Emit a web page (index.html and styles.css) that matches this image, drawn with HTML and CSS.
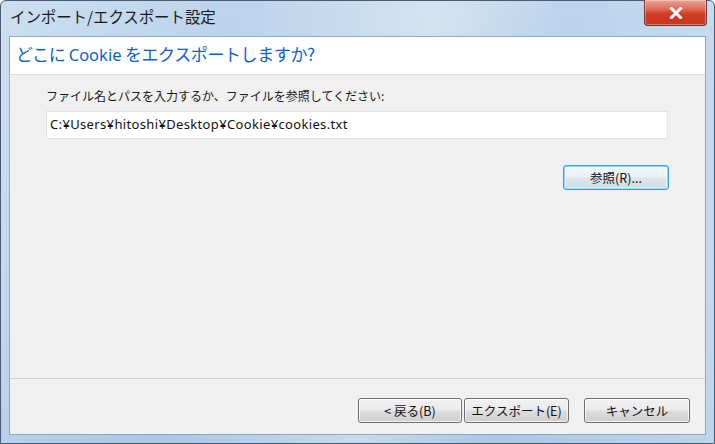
FILE: index.html
```html
<!DOCTYPE html>
<html lang="ja">
<head>
<meta charset="utf-8">
<title>インポート/エクスポート設定</title>
<link rel="stylesheet" href="styles.css">
</head>
<body>
<div class="window">
  <div class="titlebar">
    <span class="title">インポート/エクスポート設定</span>
    <div class="close">
      <svg width="14" height="12" viewBox="0 0 14 12"><path d="M2.5 1.5 L11.5 10.5 M11.5 1.5 L2.5 10.5" stroke="#fff" stroke-width="3" stroke-linecap="square"/></svg>
    </div>
  </div>
  <div class="client">
    <div class="header">どこに <span class="latin">Cookie</span> をエクスポートしますか?</div>
    <div class="body">
      <div class="label">ファイル名とパスを入力するか、ファイルを参照してください:</div>
      <div class="input">C:¥Users¥hitoshi¥Desktop¥Cookie¥cookies.txt</div>
      <div class="browse-row">
        <button class="btn default">参照(R)...</button>
      </div>
    </div>
    <div class="footer">
      <button class="btn back">&lt; 戻る(B)</button>
      <button class="btn export">エクスポート(E)</button>
      <button class="btn cancel">キャンセル</button>
    </div>
  </div>
</div>
</body>
</html>
```

FILE: styles.css
```css
* { box-sizing: border-box; }
html, body { margin: 0; padding: 0; }
body {
  width: 715px;
  height: 444px;
  overflow: hidden;
  font-family: "Noto Sans", "Noto Sans CJK JP", sans-serif;
  background: #ffffff;
}
.window {
  width: 715px;
  height: 444px;
  display: flex;
  flex-direction: column;
  padding: 0 8px 8px 8px;
  border: 1px solid #4a5a70;
  border-radius: 6px 6px 0 0;
  background:
    linear-gradient(100deg, rgba(255,255,255,0.25) 0%, rgba(255,255,255,0) 30%, rgba(255,255,255,0.35) 55%, rgba(255,255,255,0) 72%, rgba(255,255,255,0.25) 100%),
    linear-gradient(180deg, #bcd4ec 0%, #b5cfe9 60%, #a9c7e6 100%);
  position: relative;
}
.titlebar {
  height: 35px;
  flex: none;
  display: flex;
  align-items: flex-start;
  padding-top: 5px;
}
.title {
  font-family: "Noto Sans CJK JP", sans-serif;
  font-size: 15.5px;
  line-height: 21px;
  color: #1b1b1b;
  padding-left: 1px;
  letter-spacing: -0.1px;
}
.close {
  position: absolute;
  top: -1px;
  right: 7px;
  width: 63px;
  height: 26px;
  border: 1px solid #6b3a34;
  border-top: none;
  border-radius: 0 0 4px 4px;
  background: linear-gradient(180deg, #e9a597 0%, #df6f5c 35%, #d23d26 55%, #c93420 100%);
  box-shadow: inset 0 0 0 1px rgba(255,255,255,0.35);
  display: flex;
  align-items: center;
  justify-content: center;
}
.client {
  flex: 1;
  display: flex;
  flex-direction: column;
  border: 1px solid #8fa7c1;
  background: #f0f0f0;
}
.header {
  height: 38px;
  flex: none;
  background: #ffffff;
  border-bottom: 1px solid #dcdcdc;
  font-family: "Noto Sans CJK JP", sans-serif;
  font-size: 17px;
  line-height: 24px;
  color: #0f5fcc;
  padding: 5px 0 0 6px;
  letter-spacing: -0.4px;
}
.header .latin {
  font-family: "Noto Sans", sans-serif;
  font-size: 16.5px;
  letter-spacing: 0;
}
.body {
  flex: 1;
  padding: 13px 0 0 36px;
  border-bottom: 1px solid #cfcfcf;
  font-family: "Noto Sans CJK JP", sans-serif;
}
.label {
  font-size: 12px;
  line-height: 16px;
  color: #1a1a1a;
}
.input {
  margin-top: 7px;
  width: 622px;
  height: 28px;
  background: #ffffff;
  border: 1px solid #e2e2e2;
  font-family: "Noto Sans", sans-serif;
  font-size: 13px;
  line-height: 24px;
  padding-left: 3px;
  color: #111;
  letter-spacing: 0.35px;
}
.browse-row {
  display: flex;
  justify-content: flex-end;
  padding-right: 36px;
  margin-top: 26px;
}
.btn {
  height: 25px;
  border: 1px solid #707070;
  border-radius: 3px;
  background: linear-gradient(180deg, #f2f2f2 0%, #ebebeb 48%, #dddddd 52%, #cfcfcf 100%);
  box-shadow: inset 0 0 0 1px rgba(255,255,255,0.7);
  font-family: "Noto Sans CJK JP", sans-serif;
  font-size: 12.5px;
  line-height: 16px;
  color: #111;
  padding: 0;
  margin: 0;
}
.btn.default {
  width: 106px;
  border-color: #3c9fd6;
  box-shadow: inset 0 0 0 1px #8fd9fb, inset 0 0 0 2px rgba(255,255,255,0.5);
  background: linear-gradient(180deg, #f4f8fa 0%, #eaf1f4 48%, #dde5ea 52%, #d1dce2 100%);
}
.footer {
  height: 55px;
  flex: none;
  display: flex;
  align-items: flex-start;
  justify-content: flex-end;
  padding: 19px 15px 0 0;
}
.btn.back { width: 104px; }
.btn.export { width: 105px; margin-left: 2px; }
.btn.cancel { width: 106px; margin-left: 15px; }
```
